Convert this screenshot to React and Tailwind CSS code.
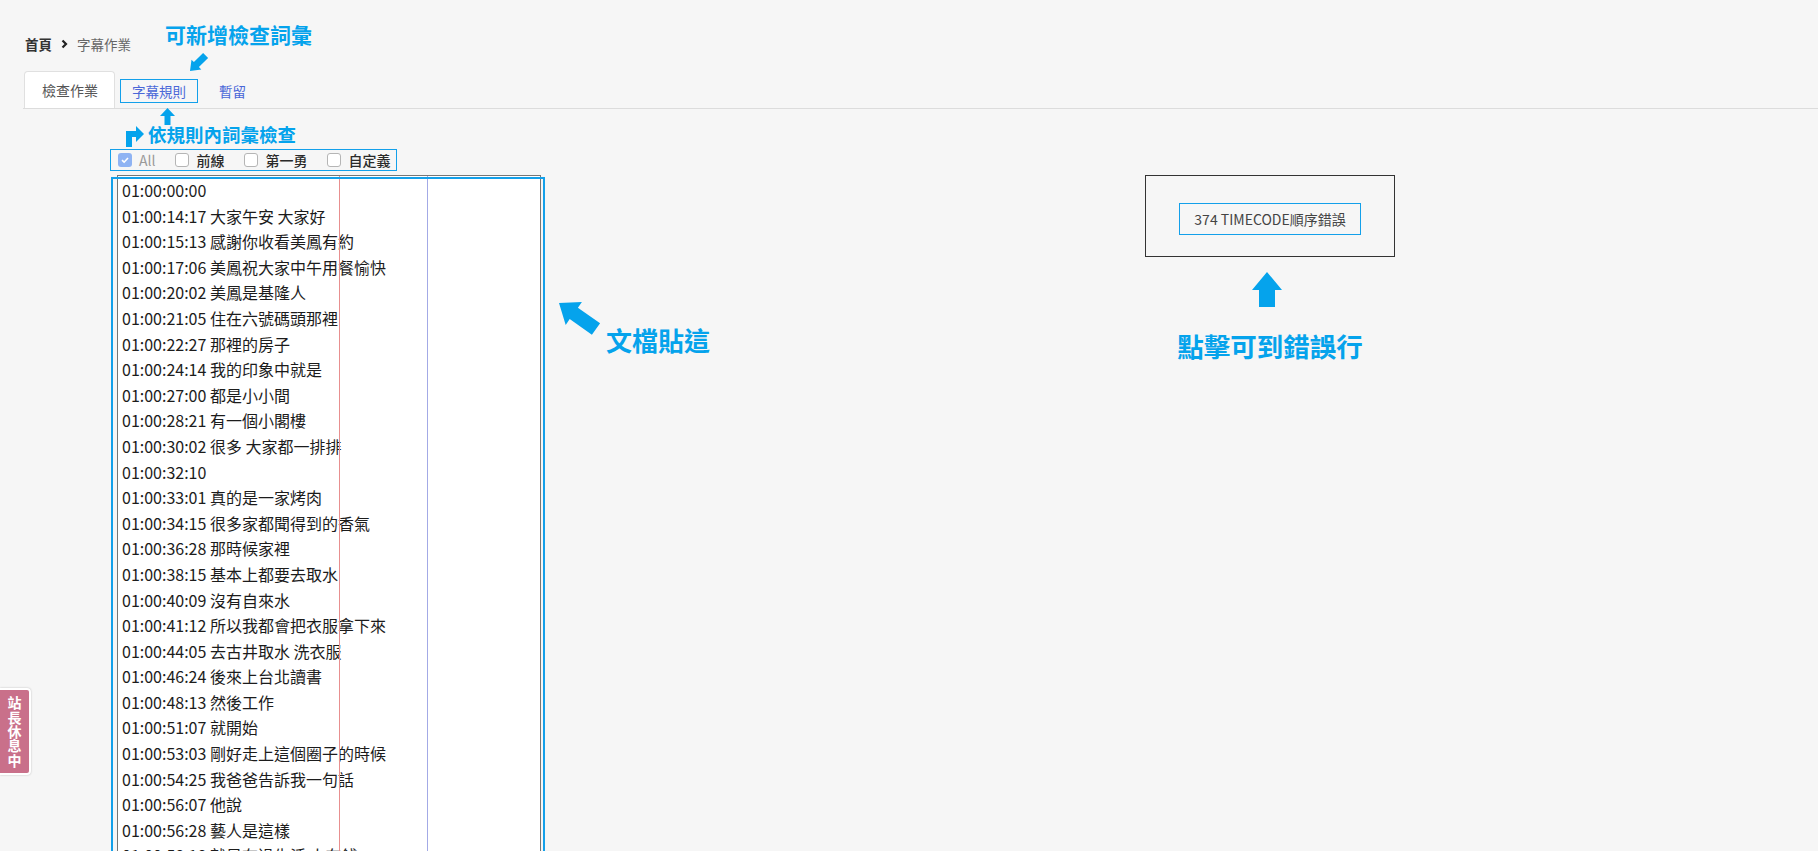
import React from 'react';

const lines = [
  '01:00:00:00',
  '01:00:14:17 大家午安 大家好',
  '01:00:15:13 感謝你收看美鳳有約',
  '01:00:17:06 美鳳祝大家中午用餐愉快',
  '01:00:20:02 美鳳是基隆人',
  '01:00:21:05 住在六號碼頭那裡',
  '01:00:22:27 那裡的房子',
  '01:00:24:14 我的印象中就是',
  '01:00:27:00 都是小小間',
  '01:00:28:21 有一個小閣樓',
  '01:00:30:02 很多 大家都一排排',
  '01:00:32:10',
  '01:00:33:01 真的是一家烤肉',
  '01:00:34:15 很多家都聞得到的香氣',
  '01:00:36:28 那時候家裡',
  '01:00:38:15 基本上都要去取水',
  '01:00:40:09 沒有自來水',
  '01:00:41:12 所以我都會把衣服拿下來',
  '01:00:44:05 去古井取水 洗衣服',
  '01:00:46:24 後來上台北讀書',
  '01:00:48:13 然後工作',
  '01:00:51:07 就開始',
  '01:00:53:03 剛好走上這個圈子的時候',
  '01:00:54:25 我爸爸告訴我一句話',
  '01:00:56:07 他說',
  '01:00:56:28 藝人是這樣',
  '01:00:58:18 就是在過生活 人在錢',
  '01:01:00:02 所以要好好存錢',
];

function Checkbox({ label, checked }) {
  return (
    <label className="flex items-center shrink-0 mr-[20px] whitespace-nowrap">
      {checked ? (
        <span className="w-[14px] h-[14px] shrink-0 rounded-[3px] bg-[#8fb3f3] flex items-center justify-center">
          <svg width="10" height="10" viewBox="0 0 10 10">
            <path d="M2 5.2 L4.1 7.2 L8 3" fill="none" stroke="#fff" strokeWidth="1.6" />
          </svg>
        </span>
      ) : (
        <span className="w-[14px] h-[14px] shrink-0 rounded-[3px] bg-white border border-[#b5b5b5]" />
      )}
      <span className={`ml-[7px] text-[14px] leading-none ${checked ? 'text-[#9a9a9a]' : 'text-[#2a2a2a] font-medium'}`}>{label}</span>
    </label>
  );
}

export default function App() {
  return (
    <div className="relative h-screen overflow-hidden bg-[#f6f6f6] font-['Noto_Sans_CJK_TC',sans-serif]">
      {/* breadcrumb */}
      <div className="pt-[34px] pl-[25px] flex items-center text-[13.5px] leading-[20px]">
        <span className="font-bold text-[#333]">首頁</span>
        <svg className="mx-[9px]" width="7" height="10" viewBox="0 0 7 10">
          <path d="M1.5 1.5 L5 5 L1.5 8.5" fill="none" stroke="#222" strokeWidth="2.2" />
        </svg>
        <span className="text-[#666]">字幕作業</span>
      </div>

      {/* tabs */}
      <div className="mt-[17px] ml-[23px] pl-[1px] flex items-end border-b border-[#dcdcdc]">
        <div className="h-[37px] pl-[17px] pr-[16px] flex items-center bg-white border border-b-0 border-[#e0e0e0] rounded-t-[4px] text-[14px] text-[#555]">
          檢查作業
        </div>
        <div className="h-[37px] px-[5px] pt-[3px] flex items-center">
          <span className="border border-[#13a0ea] px-[11px] h-[24px] leading-[22px] text-[13.5px] text-[#4a67d8]">字幕規則</span>
        </div>
        <div className="h-[37px] ml-[16px] pt-[3px] flex items-center text-[13.5px] text-[#4a67d8]">暫留</div>
      </div>

      {/* main */}
      <div className="pl-[110px] pt-[40px]">
        <div className="h-[22px] w-[287px] border border-[#13a0ea] flex items-center pl-[7px] overflow-visible">
          <Checkbox label="All" checked />
          <Checkbox label="前線" />
          <Checkbox label="第一勇" />
          <Checkbox label="自定義" />
        </div>

        <div className="flex mt-[4px]">
          <div className="relative ml-[7px] w-[424px] h-[760px] border border-[#767676] bg-white pl-[4px] pt-[2px]">
            {lines.map((l, i) => (
              <div key={i} className="whitespace-pre text-[16px] leading-[25.6px] text-[#1c1c1c]">{l}</div>
            ))}
            <div className="absolute left-[221px] top-0 bottom-0 w-px bg-[#e88f8f]" />
            <div className="absolute left-[309px] top-0 bottom-0 w-px bg-[#a3aae6]" />
            <div className="absolute left-[-7px] right-[-5px] top-[1px] bottom-[-20px] border-2 border-[#13a0ea]" />
          </div>

          <div className="ml-[604px] w-[250px] flex flex-col items-center">
            <div className="w-[250px] h-[82px] border border-[#333] flex justify-center pt-[27px]">
              <button className="w-[182px] h-[32px] border border-[#13a0ea] text-[14px] text-[#444] flex items-center justify-center">
                374 TIMECODE順序錯誤
              </button>
            </div>
            <svg className="mt-[15px] ml-[-6px]" width="30" height="35" viewBox="0 0 30 35">
              <polygon points="15,0 30,18 23,18 23,35 7,35 7,18 0,18" fill="#05a3ec" />
            </svg>
            <div className="mt-[26px] text-[26.5px] leading-none font-bold text-[#05a3ec]">點擊可到錯誤行</div>
          </div>
        </div>
      </div>

      {/* annotations */}
      <div className="absolute left-[165px] top-[24px] text-[21px] leading-none font-bold text-[#05a3ec]">可新增檢查詞彙</div>
      <svg className="absolute left-[189px] top-[52px]" width="20" height="20" viewBox="0 -2 20 20">
        <polygon points="1,17 12.3,15.5 9.9,13.1 19.1,3.9 14.1,-1.1 4.9,8.1 2.5,5.7" fill="#05a3ec" />
      </svg>
      <svg className="absolute left-[160px] top-[108px]" width="15" height="17" viewBox="0 0 15 17">
        <polygon points="7.5,0 15,8 10.5,8 10.5,17 4.5,17 4.5,8 0,8" fill="#05a3ec" />
      </svg>
      <svg className="absolute left-[126px] top-[126px]" width="18" height="21" viewBox="0 0 18 21">
        <polygon points="0,21 0,5 10,5 10,0 18,8 10,16 10,11 6,11 6,21" fill="#05a3ec" />
      </svg>
      <div className="absolute left-[148px] top-[125px] text-[18.5px] leading-none font-bold text-[#05a3ec]">依規則內詞彙檢查</div>

      <svg className="absolute left-[556px] top-[300px]" width="48" height="38" viewBox="-2 -2 48 38">
        <polygon points="1,1 23.9,-0.1 19.9,5.7 42.1,21.3 33.9,32.7 11.7,17.1 7.7,22.9" fill="#05a3ec" />
      </svg>
      <div className="absolute left-[606px] top-[327px] text-[26px] leading-none font-bold text-[#05a3ec]">文檔貼這</div>

      {/* side tab */}
      <div className="absolute left-0 top-[688px] w-[31px] h-[87px] bg-[#c9708a] border-2 border-l-0 border-white rounded-r-[4px] shadow-[0_0_2px_rgba(0,0,0,0.25)] flex items-center justify-center">
        <span className="[writing-mode:vertical-rl] text-white font-bold text-[14px] leading-[14px] tracking-[0.3px]">站長休息中</span>
      </div>
    </div>
  );
}
